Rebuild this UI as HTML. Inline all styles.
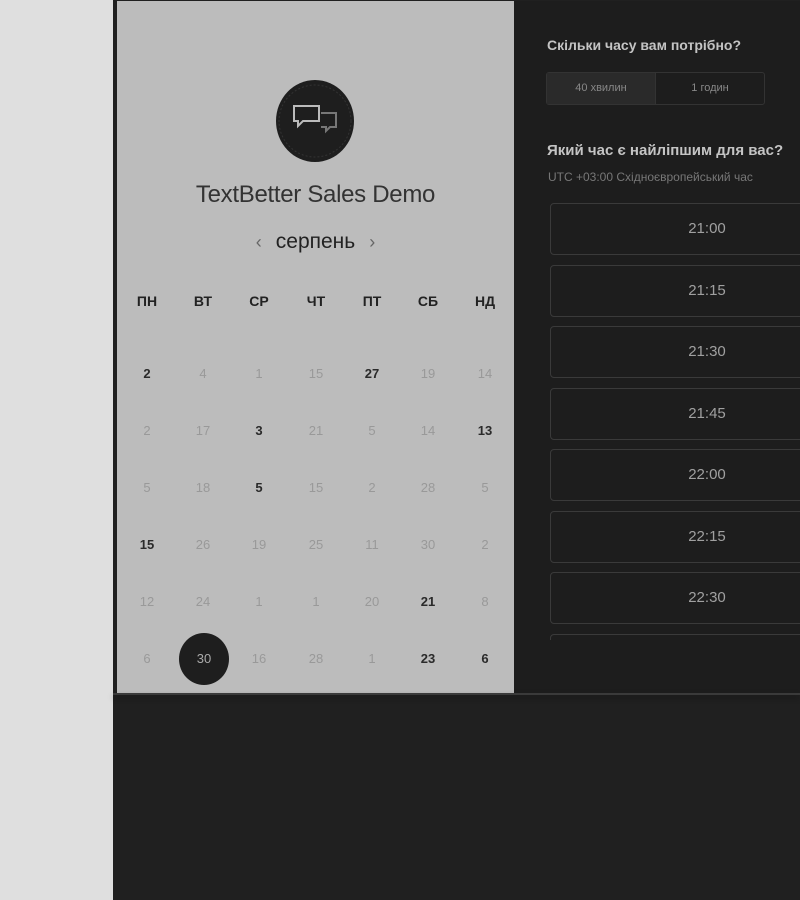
<!DOCTYPE html>
<html><head><meta charset="utf-8"><style>
*{margin:0;padding:0;box-sizing:border-box}
body{width:800px;height:900px;background:#dfdfdf;position:relative;overflow:hidden;font-family:"Liberation Sans","DejaVu Sans",sans-serif}
.dark{position:absolute;left:113px;top:0;width:687px;height:900px;background:#202020}
.left{position:absolute;left:117px;top:1px;width:397px;height:692px;background:#bcbcbc}
.right{position:absolute;left:514px;top:1px;width:286px;height:692px;background:#1d1d1d;overflow:hidden}
.sep{position:absolute;left:113px;top:693px;width:687px;height:2px;background:#3a3a3a;box-shadow:0 3px 6px rgba(0,0,0,.4)}
.logo{position:absolute;left:276px;top:80px;width:78px;height:82px;border-radius:50%;background:#1e1e1e}
.title{position:absolute;left:117px;width:397px;top:181px;text-align:center;font-size:24px;color:#333;letter-spacing:-.3px}
.month{position:absolute;left:117px;width:397px;top:230px;text-align:center;font-size:21px;color:#222}
.month span{color:#666;font-size:18px;margin:0 14px}
.c{position:absolute;width:50px;margin-left:-25px;text-align:center;font-size:13px;color:#999}
.b{color:#2a2a2a;font-weight:bold}
.h{font-weight:bold;color:#222;font-size:14px}
.sel{position:absolute;left:179px;top:633px;width:50px;height:52px;border-radius:50%;background:#1e1e1e;color:#aaa;font-size:13px;text-align:center;line-height:52px}
.q{position:absolute;left:547px;font-size:14px;font-weight:bold;color:#c4c4c4}
.seg{position:absolute;left:546px;top:72px;width:219px;height:33px;border:1px solid #333;border-radius:3px;display:flex;font-size:11px;color:#888}
.seg div{flex:1;text-align:center;line-height:31px}
.seg div:first-child{background:#2a2a2a;border-right:1px solid #333}
.slot{position:absolute;left:550px;width:320px;height:52px;border:1px solid #3a3a3a;border-radius:4px;text-align:center;line-height:50px;color:#a0a0a0;font-size:15px;padding-right:6px}
</style></head><body>
<div class="dark"></div>
<div class="left"></div>
<div class="right"></div>
<div class="sep"></div>
<div class="logo"><svg width="78" height="82" viewBox="0 0 78 82"><circle cx="39" cy="41" r="36" fill="none" stroke="#333" stroke-width="1" stroke-dasharray="2 2"/><path d="M45 33h15v14h-6l-4 4v-4h-5" fill="none" stroke="#777" stroke-width="2"/><path d="M18 26h25v15H27l-5 5v-5h-4z" fill="#1e1e1e" stroke="#bbb" stroke-width="2"/></svg></div>
<div class="title">TextBetter Sales Demo</div>
<div class="month"><span>‹</span>серпень<span>›</span></div>
<div class="c h" style="left:147px;top:293px">ПН</div><div class="c h" style="left:203px;top:293px">ВТ</div><div class="c h" style="left:259px;top:293px">СР</div><div class="c h" style="left:316px;top:293px">ЧТ</div><div class="c h" style="left:372px;top:293px">ПТ</div><div class="c h" style="left:428px;top:293px">СБ</div><div class="c h" style="left:485px;top:293px">НД</div>

<div class="c b" style="left:147px;top:366px">2</div><div class="c" style="left:203px;top:366px">4</div><div class="c" style="left:259px;top:366px">1</div><div class="c" style="left:316px;top:366px">15</div><div class="c b" style="left:372px;top:366px">27</div><div class="c" style="left:428px;top:366px">19</div><div class="c" style="left:485px;top:366px">14</div>
<div class="c" style="left:147px;top:423px">2</div><div class="c" style="left:203px;top:423px">17</div><div class="c b" style="left:259px;top:423px">3</div><div class="c" style="left:316px;top:423px">21</div><div class="c" style="left:372px;top:423px">5</div><div class="c" style="left:428px;top:423px">14</div><div class="c b" style="left:485px;top:423px">13</div>
<div class="c" style="left:147px;top:480px">5</div><div class="c" style="left:203px;top:480px">18</div><div class="c b" style="left:259px;top:480px">5</div><div class="c" style="left:316px;top:480px">15</div><div class="c" style="left:372px;top:480px">2</div><div class="c" style="left:428px;top:480px">28</div><div class="c" style="left:485px;top:480px">5</div>
<div class="c b" style="left:147px;top:537px">15</div><div class="c" style="left:203px;top:537px">26</div><div class="c" style="left:259px;top:537px">19</div><div class="c" style="left:316px;top:537px">25</div><div class="c" style="left:372px;top:537px">11</div><div class="c" style="left:428px;top:537px">30</div><div class="c" style="left:485px;top:537px">2</div>
<div class="c" style="left:147px;top:594px">12</div><div class="c" style="left:203px;top:594px">24</div><div class="c" style="left:259px;top:594px">1</div><div class="c" style="left:316px;top:594px">1</div><div class="c" style="left:372px;top:594px">20</div><div class="c b" style="left:428px;top:594px">21</div><div class="c" style="left:485px;top:594px">8</div>
<div class="c" style="left:147px;top:651px">6</div><div class="sel">30</div><div class="c" style="left:259px;top:651px">16</div><div class="c" style="left:316px;top:651px">28</div><div class="c" style="left:372px;top:651px">1</div><div class="c b" style="left:428px;top:651px">23</div><div class="c b" style="left:485px;top:651px">6</div>

<div class="q" style="top:37px">Скільки часу вам потрібно?</div>
<div class="seg"><div>40 хвилин</div><div>1 годин</div></div>
<div class="q" style="top:142px;font-size:15px">Який час є найліпшим для вас?</div>
<div style="position:absolute;left:548px;top:170px;font-size:12px;color:#777;white-space:nowrap">UTC +03:00 Східноєвропейський час</div>
<div style="position:absolute;left:514px;top:0;width:286px;height:640px;overflow:hidden">
<div class="slot" style="left:36px;top:203px">21:00</div>
<div class="slot" style="left:36px;top:265px">21:15</div>
<div class="slot" style="left:36px;top:326px">21:30</div>
<div class="slot" style="left:36px;top:388px">21:45</div>
<div class="slot" style="left:36px;top:449px">22:00</div>
<div class="slot" style="left:36px;top:511px">22:15</div>
<div class="slot" style="left:36px;top:572px">22:30</div>
<div class="slot" style="left:36px;top:634px">22:45</div>
</div>
</body></html>
